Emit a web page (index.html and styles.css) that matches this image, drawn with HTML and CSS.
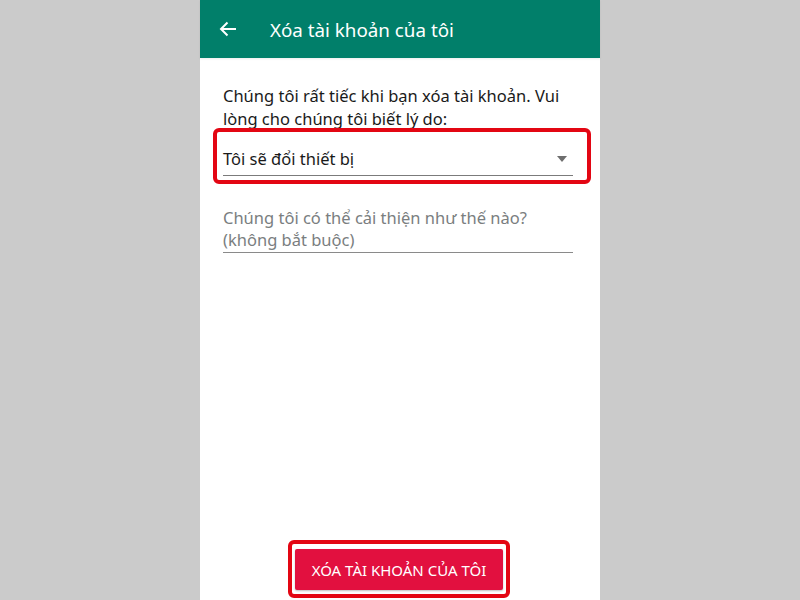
FILE: index.html
```html
<!DOCTYPE html>
<html lang="vi">
<head>
<meta charset="utf-8">
<link rel="stylesheet" href="styles.css">
</head>
<body>
<div class="phone">
  <header class="appbar">
    <svg class="back" width="18" height="16" viewBox="0 0 18 16"><path d="M17 8H2M8.5 1.5L2 8l6.5 6.5" fill="none" stroke="#fff" stroke-width="2"/></svg>
    <h1 class="title">Xóa tài khoản của tôi</h1>
  </header>
  <main class="content">
    <p class="intro">Chúng tôi rất tiếc khi bạn xóa tài khoản. Vui lòng cho chúng tôi biết lý do:</p>
    <div class="select annot">
      <span class="select-text">Tôi sẽ đổi thiết bị</span>
      <span class="caret"></span>
    </div>
    <div class="textarea">Chúng tôi có thể cải thiện như thế nào?<br>(không bắt buộc)</div>
    <div class="spacer"></div>
    <div class="actions">
      <button class="danger annot">XÓA TÀI KHOẢN CỦA TÔI</button>
    </div>
  </main>
</div>
</body>
</html>
```
FILE: styles.css
```css
html, body { margin: 0; padding: 0; }
body {
  background: #cbcbcb;
  font-family: "Noto Sans", "Open Sans", sans-serif;
  width: 800px;
  height: 600px;
  overflow: hidden;
}
.phone {
  width: 400px;
  height: 600px;
  margin: 0 auto;
  background: #fff;
  display: flex;
  flex-direction: column;
}
.appbar {
  height: 58px;
  flex: none;
  background: #017f6a;
  display: flex;
  align-items: center;
  padding-left: 19px;
  box-shadow: 0 1px 2px rgba(0,0,0,0.08);
}
.back { display: block; margin-right: 33px; }
.title {
  margin: 0;
  color: #fff;
  font-weight: 400;
  font-size: 18.8px;
  line-height: 24px;
  padding-top: 2px;
}
.content {
  flex: 1;
  display: flex;
  flex-direction: column;
  padding: 26px 27px 0 23px;
}
.intro {
  margin: 0;
  font-size: 16.5px;
  line-height: 23px;
  color: #1a1a1a;
}
.select {
  height: 46px;
  border-bottom: 1px solid #7b7b7b;
  display: flex;
  align-items: flex-end;
  justify-content: space-between;
  font-size: 16.5px;
  line-height: 23px;
  color: #1a1a1a;
  padding-bottom: 5px;
  box-sizing: border-box;
}
.caret {
  width: 0; height: 0;
  border-left: 5.5px solid transparent;
  border-right: 5.5px solid transparent;
  border-top: 6px solid #6e6e6e;
  margin-right: 6px;
  margin-bottom: 8px;
}
.annot { position: relative; }
.annot::after {
  content: "";
  position: absolute;
  border: 4px solid #e30613;
  border-radius: 6px;
  pointer-events: none;
}
.select.annot::after { left: -10px; right: -18px; top: -2px; bottom: -9px; }
.textarea {
  margin-top: 31px;
  font-size: 16.5px;
  line-height: 22px;
  color: #7a7e80;
  padding-bottom: 1px;
  border-bottom: 1px solid #8a8a8a;
}
.spacer { flex: 1; }
.actions {
  display: flex;
  justify-content: center;
  padding: 0 0 10px 2px;
}
.danger {
  width: 208px;
  height: 41px;
  border: none;
  border-radius: 2px;
  background: #e2103f;
  color: #fff;
  font-family: "Noto Sans", "Open Sans", sans-serif;
  font-size: 15px;
  box-shadow: 0 1px 2px rgba(0,0,0,0.25);
  padding: 0;
}
.danger.annot::after { left: -7px; right: -7px; top: -9px; bottom: -8px; }
```
